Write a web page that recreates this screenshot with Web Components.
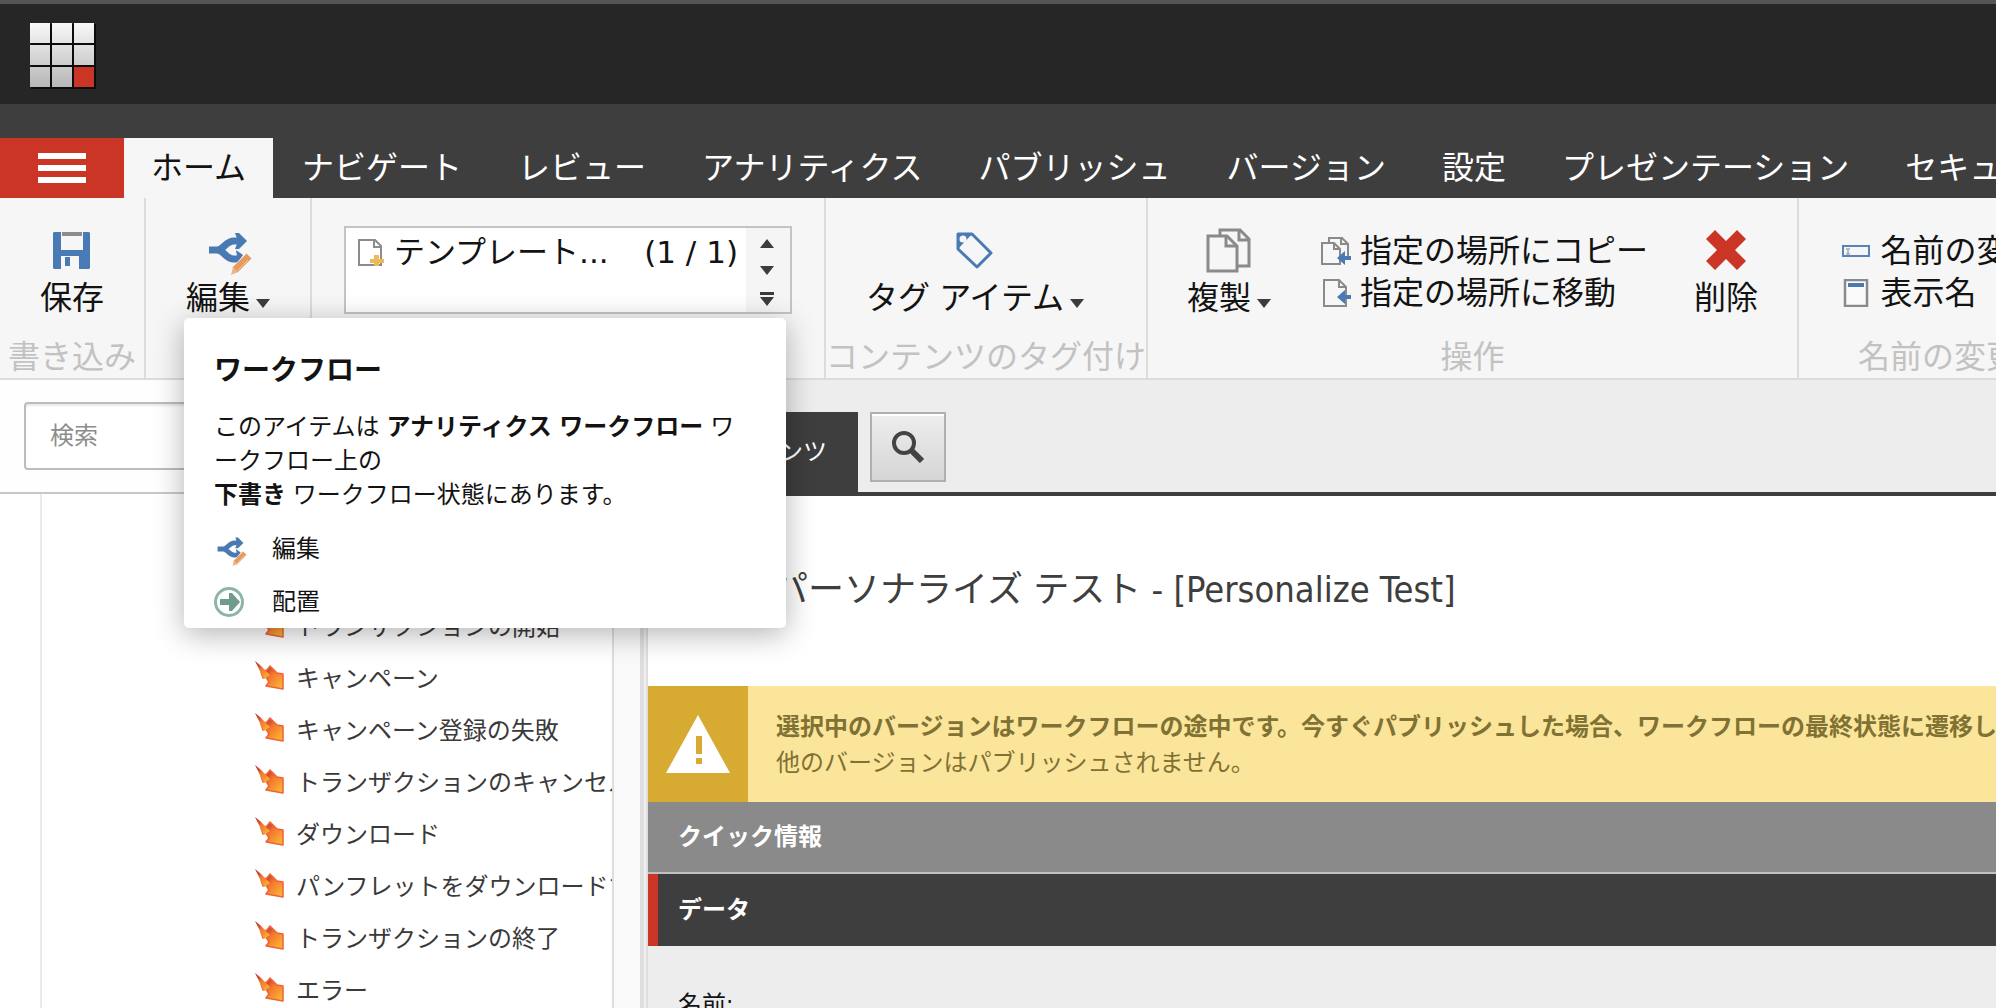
<!DOCTYPE html>
<html lang="ja">
<head>
<meta charset="utf-8">
<title>コンテンツ エディター</title>
<style>
html,body{margin:0;height:100%;overflow:hidden}
body{font-family:"DejaVu Sans Condensed","Noto Sans CJK JP",sans-serif;color:#131313;background:#fff}
</style>
</head>
<body>
<cm-app></cm-app>
<script>
const ICONS={
logo:[66,66,`<defs><linearGradient id="g" gradientUnits="userSpaceOnUse" x1="0" y1="0" x2="0" y2="66"><stop offset="0" stop-color="#f8f8f8"/><stop offset="1" stop-color="#b4b4b4"/></linearGradient></defs><rect x="1" y="1" width="65" height="65" fill="#0c0c0c"/><path fill="url(#g)" d="M0 0h20v20H0zM22 0h20v20H22zM44 0h20v20H44zM0 22h20v20H0zM22 22h20v20H22zM44 22h20v20H44zM0 44h20v20H0zM22 44h20v20H22z"/><path fill="#cb3526" d="M44 44h20v20H44z"/>`],
burger:[48,30,`<path fill="#fff" d="M0 0h48v6H0zM0 12h48v6H0zM0 24h48v6H0z"/>`],
save:[37,37,`<path fill="#4a7ab3" fill-rule="evenodd" d="M1 0h7v18h22V0h6l1 1v35l-1 1H1l-1-1V1zM8 24v13h18V24z"/><path fill="#4a7ab3" d="M12 25h5v9h-5z"/><path fill="#8c8c8c" d="M9 0h20v4H9z"/>`],
flow:[48,50,`<g transform="translate(5 8)"><g fill="none" stroke="#4a7ab3" stroke-width="7"><path d="M0 17h9C15 16 17 8 25 8h6"/><path d="M9 17c6 1 8 9 16 9h5"/></g><path fill="#4a7ab3" d="M26 0h4l8 8-8 8-4 0 3-8zM27 17l7 5-5 8z"/><path d="M40 23L24 40" stroke="#f6f6f6" stroke-width="9"/><path d="M40 23L26 37" stroke="#e59a5f" stroke-width="7"/><path d="M39 27L29 37" stroke="#f3c6a0" stroke-width="1"/><path fill="#e8b48a" d="M22 42l2-8 5 5z"/></g>`],
down:[14,9,`<path fill="#3c3c3c" d="M0 0h14L7 9z"/>`],
up:[14,9,`<path fill="#3c3c3c" d="M0 9h14L7 0z"/>`],
more:[14,14,`<path fill="#3c3c3c" d="M0 0h14v3H0zM0 5h14l-7 9z"/>`],
doc:[28,28,`<path fill="#fff" stroke="#8c8c8c" stroke-width="2" d="M2 27V2h16l6 6v19z"/><path fill="none" stroke="#8c8c8c" stroke-width="2" d="M17 2v7h7"/><path fill="#e9b95a" d="M17 17h5v4h5v4h-5v3h-5v-3h-4v-4h4z"/>`],
tag:[37,37,`<path fill="#f6f6f6" stroke="#4a7ab3" stroke-width="3" stroke-linejoin="round" d="M2 2h14l19 19-14 14L2 17z"/><path fill="#4a7ab3" d="M1 1h16L1 18z"/><circle cx="7" cy="7" r="3.500" fill="#f6f6f6"/>`],
copy:[45,45,`<g fill="#f6f6f6" stroke="#8a8a8a" stroke-width="3"><path d="M14 38V2h20l9 9v27z"/><path d="M33 2v10h10" fill="none"/><path d="M2 43V8h19l10 10v25z"/><path d="M20 8v10h10" fill="none"/></g>`],
copyto:[30,28,`<g fill="#f6f6f6" stroke="#8a8a8a" stroke-width="2"><path d="M8 20V1h13l6 6v14z"/><path d="M20 1v6h7" fill="none"/><path d="M1 27V6h12l6 6v15z"/><path d="M13 6v6h6" fill="none"/></g><path fill="#4a7ab3" d="M16 21l8-7v5h6v4h-6v5z"/>`],
moveto:[30,28,`<path fill="#f6f6f6" stroke="#8a8a8a" stroke-width="2" d="M3 27V1h15l7 7v19z"/><path d="M18 1v7h7" fill="none" stroke="#8a8a8a" stroke-width="2"/><path fill="#4a7ab3" d="M16 18l8-7v5h6v4h-6v5z"/>`],
del:[40,40,`<path fill="#cb3526" d="M9 0l11 11L31 0l9 9-11 11 11 11-9 9-11-11L9 40l-9-9 11-11L0 9z"/>`],
rename:[30,28,`<path fill="#f6f6f6" stroke="#5584ba" stroke-width="2" d="M2 9h26v10H2z"/><path fill="none" stroke="#b9b9b9" stroke-width="2" d="M5 12h4M7 12v6M5 17h4"/>`],
display:[30,28,`<path fill="#fafafa" stroke="#8a8a8a" stroke-width="2.500" d="M4 1h22v26H4z"/><path fill="#4a7ab3" d="M7 4h16v4H7z"/>`],
search:[32,32,`<circle cx="12" cy="12" r="10" fill="none" stroke="#434343" stroke-width="4"/><path d="M19 19l11 11" stroke="#434343" stroke-width="6"/>`],
deploy:[30,30,`<circle cx="15" cy="15" r="13.500" fill="#fff" stroke="#8db5a5" stroke-width="3"/><path fill="#6f9d8c" d="M6 12h9V6h3l8 9-8 9h-3v-6H6z"/>`],
goal:[30,30,`<defs><linearGradient id="h" x1="0" y1="0" x2="1" y2="1"><stop offset="0" stop-color="#9c2a2a"/><stop offset=".25" stop-color="#d0492c"/><stop offset=".45" stop-color="#f4772f"/><stop offset="1" stop-color="#fbc034"/></linearGradient></defs><path fill="url(#h)" stroke="#ef6238" stroke-width="1.500" stroke-linejoin="round" d="M12 9l3-4 7 7 6 1v15l-17-3 3-4-3-5-3 1-2-6z"/><path fill="url(#h)" d="M0 0l5 4 10 10-6 4z"/>`],
warn:[64,58,`<path fill="#fff" d="M32 0l32 58H0z"/><path fill="#d7aa32" d="M30 21h6v18h-6zM30 43h6v6h-6z"/>`]
};
const def=(name,html)=>customElements.define(name,class extends HTMLElement{
  constructor(){super();this.attachShadow({mode:'open'}).innerHTML=html}
});
customElements.define('cm-icon',class extends HTMLElement{
  connectedCallback(){
    if(this.shadowRoot)return;
    const [w,h,body]=ICONS[this.getAttribute('name')],k=(+this.getAttribute('width')||w)/w;
    this.attachShadow({mode:'open'}).innerHTML=`<style>:host{display:block;flex:none}svg{display:block}</style><svg width="${Math.round(w*k)}" height="${Math.round(h*k)}" viewBox="0 0 ${w} ${h}" aria-hidden="true">${body}</svg>`;
  }
});
const BTN='button{font:inherit;color:inherit;background:none;border:0;padding:0;margin:0;cursor:pointer;white-space:nowrap}';

def('cm-header',`<style>:host{display:block;flex:none;background:#262626;border-top:4px solid #555558;padding:19px 30px 15px}</style><cm-icon name="logo"></cm-icon>`);

def('cm-tabs',`<style>${BTN}
:host{display:block;flex:none;background:#3e3e3e;padding-top:34px;overflow:hidden}
nav{display:flex;gap:2px;height:60px;font-size:32px;line-height:60px;color:#fff}
nav button{flex:none;padding:0 27px}
nav .menu{background:#cb3526;padding:0 38px;margin-right:-2px}
nav .on{background:#f6f6f6;color:#131313}
</style><nav aria-label="リボン"><button class="menu" aria-label="メニュー"><cm-icon name="burger"></cm-icon></button><button class="on">ホーム</button><button>ナビゲート</button><button>レビュー</button><button>アナリティクス</button><button>パブリッシュ</button><button>バージョン</button><button>設定</button><button>プレゼンテーション</button><button>セキュリティ</button></nav>`);

def('cm-chunk',`<style>
:host{display:flex;flex-direction:column;flex:none;box-sizing:border-box;height:180px;border-right:2px solid #dcdcdc;position:relative;font-size:32px}
.row{flex:1;display:flex;justify-content:var(--row-align,center);align-items:flex-start}
.cap{height:42px;line-height:42px;text-align:center;color:#c2c2c2;white-space:nowrap}
</style><div class="row"><slot></slot></div><div class="cap"><slot name="caption"></slot></div><slot name="popup"></slot>`);

customElements.define('cm-big',class extends HTMLElement{
  connectedCallback(){
    if(this.shadowRoot)return;
    this.attachShadow({mode:'open'}).innerHTML=`<style>${BTN}
:host{display:block}
button{display:flex;flex-direction:column;align-items:center;padding-top:28px}
.ic{height:48px;display:flex;align-items:center}
.lb{display:flex;align-items:center;gap:6px;line-height:48px}
.lb cm-icon{padding-top:10px}
</style><button><span class="ic"><cm-icon name="${this.getAttribute('icon')}"></cm-icon></span><span class="lb"><slot></slot>${this.hasAttribute('menu')?'<cm-icon name="down"></cm-icon>':''}</span></button>`;
  }
});
customElements.define('cm-small',class extends HTMLElement{
  connectedCallback(){
    if(this.shadowRoot)return;
    this.attachShadow({mode:'open'}).innerHTML=`<style>${BTN}
:host{display:block}
button{display:flex;align-items:center;gap:9px;line-height:42px}
</style><button><cm-icon name="${this.getAttribute('icon')}"></cm-icon><slot></slot></button>`;
  }
});

def('cm-gallery',`<style>${BTN}
:host{display:flex;box-sizing:border-box;width:448px;height:88px;margin-top:28px;border:2px solid #c4c4c4;background:#fff}
.main{flex:1;display:flex;align-items:center;align-self:flex-start;gap:9px;padding:0 8px 0 11px;line-height:48px;font-family:"DejaVu Sans","Noto Sans CJK JP",sans-serif;font-size:31px}
.n{margin-left:auto}
.spin{width:44px;background:#f5f5f5;display:flex;flex-direction:column;justify-content:space-between;align-items:center;padding:11px 2px 6px 0;box-sizing:border-box}
</style><button class="main"><cm-icon name="doc"></cm-icon><span>テンプレート...</span><span class="n">(1 / 1)</span></button><div class="spin"><button aria-label="前へ"><cm-icon name="up"></cm-icon></button><button aria-label="次へ"><cm-icon name="down"></cm-icon></button><button aria-label="一覧"><cm-icon name="more"></cm-icon></button></div>`);

def('cm-popup',`<style>${BTN}
:host{display:block;position:absolute;left:38px;top:120px;z-index:5;box-sizing:border-box;width:602px;height:310px;padding:34px 30px 0;background:#fff;border-radius:5px;box-shadow:0 6px 30px rgba(0,0,0,.3);font-size:24px;line-height:34px;white-space:nowrap}
h2{margin:0 0 20px;font-size:28px;line-height:38px}
p{margin:0 0 10px}
.item{display:flex;align-items:center;gap:24px;height:53px}
.item cm-icon{width:34px}
</style><h2>ワークフロー</h2><p>このアイテムは <b>アナリティクス ワークフロー</b> ワ<br>ークフロー上の<br><b>下書き</b> ワークフロー状態にあります。</p><button class="item"><cm-icon name="flow" width="33"></cm-icon>編集</button><button class="item"><cm-icon name="deploy"></cm-icon>配置</button>`);

def('cm-ribbon',`<style>
:host{display:flex;flex:none;background:#f6f6f6;border-bottom:2px solid #dcdcdc}
.a{width:146px}.b{width:166px}.c{width:514px}.d{width:322px}.e{width:651px}.f{width:280px}
.d{--row-align:flex-start}
.d cm-big{margin-left:40px}
.col{display:flex;flex-direction:column;padding-top:32px}
.e .col{margin:0 46px 0 50px}
.f .col{margin-right:-6px}
</style>
<cm-chunk class="a"><cm-big icon="save">保存</cm-big><span slot="caption">書き込み</span></cm-chunk>
<cm-chunk class="b"><cm-big icon="flow" menu>編集</cm-big><cm-popup slot="popup"></cm-popup></cm-chunk>
<cm-chunk class="c"><cm-gallery></cm-gallery></cm-chunk>
<cm-chunk class="d"><cm-big icon="tag" menu>タグ アイテム</cm-big><span slot="caption">コンテンツのタグ付け</span></cm-chunk>
<cm-chunk class="e"><cm-big icon="copy" menu>複製</cm-big><div class="col"><cm-small icon="copyto">指定の場所にコピー</cm-small><cm-small icon="moveto">指定の場所に移動</cm-small></div><cm-big icon="del">削除</cm-big><span slot="caption">操作</span></cm-chunk>
<cm-chunk class="f"><div class="col"><cm-small icon="rename">名前の変更</cm-small><cm-small icon="display">表示名</cm-small></div><span slot="caption">名前の変更</span></cm-chunk>`);

def('cm-tree-item',`<style>
:host{display:block}
a{display:flex;align-items:center;gap:11px;height:52px;color:#3a3a3a;text-decoration:none;white-space:nowrap;font-size:24px}
</style><a href="#"><cm-icon name="goal"></cm-icon><slot></slot></a>`);

def('cm-sidebar',`<style>
:host{display:flex;flex-direction:column;flex:none;width:648px;min-height:0}
.find{padding:22px 24px;border-bottom:2px solid #c8c8c8;background:#fefefe}
input{display:block;box-sizing:border-box;width:100%;height:68px;border:2px solid #bcbcbc;border-radius:4px;padding:0 24px;font:inherit;font-size:24px;background:#fff;box-shadow:inset 0 2px 2px #e8e8e8}
input::placeholder{color:#8c8c8c}
.body{flex:1;display:flex;min-height:0}
.tree{flex:1;min-width:0;overflow:hidden;margin-left:40px;border-left:2px solid #ebebeb;padding:104px 0 0 213px}
.bar{box-sizing:border-box;width:36px;background:#fafafa;border-left:2px solid #dedede;border-right:2px solid #dedede;display:flex;justify-content:flex-end}
.bar i{width:2px;background:#f0f0f0;border-left:4px solid #dedede}
</style><div class="find"><input type="search" placeholder="検索" aria-label="検索"></div>
<div class="body"><div class="tree"><cm-tree-item>トランザクションの開始</cm-tree-item><cm-tree-item>キャンペーン</cm-tree-item><cm-tree-item>キャンペーン登録の失敗</cm-tree-item><cm-tree-item>トランザクションのキャンセル</cm-tree-item><cm-tree-item>ダウンロード</cm-tree-item><cm-tree-item>パンフレットをダウンロードする</cm-tree-item><cm-tree-item>トランザクションの終了</cm-tree-item><cm-tree-item>エラー</cm-tree-item></div><div class="bar"><i></i></div></div>`);

def('cm-alert',`<style>
:host{display:flex;height:116px;background:#fbe59a;color:#7f7234;font-size:24px;line-height:36px;white-space:nowrap;overflow:hidden}
.ic{flex:none;width:100px;background:#d7aa32;display:flex;align-items:center;justify-content:center}
.tx{padding:23px 0 0 28px}
</style><div class="ic"><cm-icon name="warn"></cm-icon></div><div class="tx"><b><slot name="title"></slot></b><br><slot></slot></div>`);

def('cm-editor',`<style>${BTN}
:host{display:flex;flex-direction:column;flex:1;min-width:0;background:#fff;font-size:24px}
.bar{display:flex;align-items:flex-start;gap:12px;height:80px;padding:32px 0 0 28px;background:#ededed;border-bottom:4px solid #3e3e3e}
.tab{height:80px;padding:0 31px;background:#3e3e3e;color:#fff;line-height:78px}
.find{box-sizing:border-box;width:76px;height:70px;border:2px solid #b0b0b0;background:linear-gradient(#eee,#d5d5d5);box-shadow:inset 0 2px #fff;display:flex;align-items:center;justify-content:center}
h1{margin:0;padding-left:124px;height:190px;line-height:188px;font-size:36px;font-weight:400;color:#3e3e3e;white-space:nowrap}
.sec{display:block;text-align:left;box-sizing:border-box;font-weight:700;color:#fff;padding-left:30px}
.quick{height:72px;line-height:70px;background:#8a8a8a;border-bottom:2px solid #c0c0c0}
.data{height:72px;line-height:70px;background:#3e3e3e;border-left:10px solid #cb3526;padding-left:20px}
.fields{flex:1;background:#ededed;padding:42px 30px 0;line-height:34px;overflow:hidden}
</style><div class="bar"><button class="tab">コンテンツ</button><button class="find" aria-label="検索"><cm-icon name="search"></cm-icon></button></div>
<h1>パーソナライズ テスト - [Personalize Test]</h1>
<cm-alert><span slot="title">選択中のバージョンはワークフローの途中です。今すぐパブリッシュした場合、ワークフローの最終状態に遷移し</span>他のバージョンはパブリッシュされません。</cm-alert>
<button class="sec quick">クイック情報</button><button class="sec data">データ</button>
<div class="fields">名前:</div>`);

def('cm-app',`<style>
:host{display:flex;flex-direction:column;height:100vh;overflow:hidden}
main{flex:1;display:flex;min-height:0}
</style><cm-header></cm-header><cm-tabs></cm-tabs><cm-ribbon></cm-ribbon><main><cm-sidebar></cm-sidebar><cm-editor></cm-editor></main>`);
</script>
</body>
</html>
